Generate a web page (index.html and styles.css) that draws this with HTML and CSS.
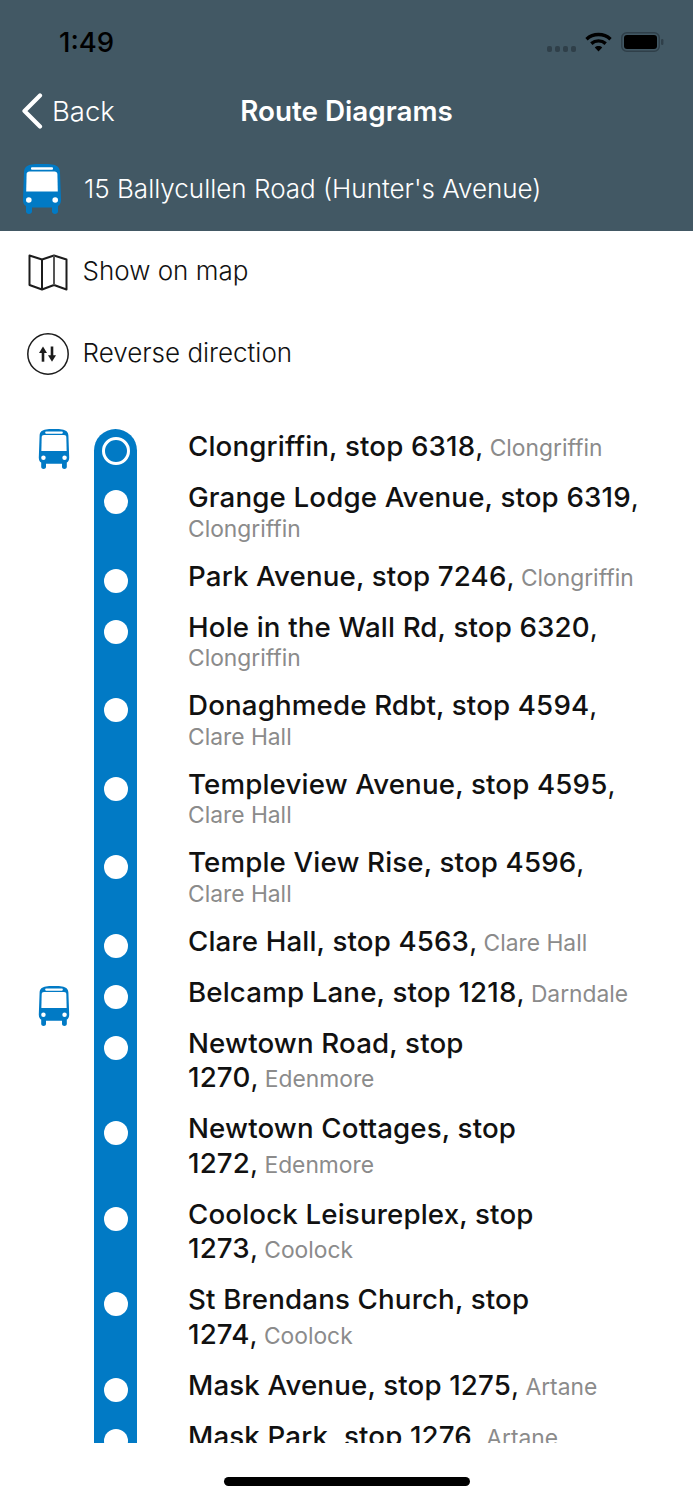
FILE: index.html
```html
<!DOCTYPE html>
<html lang="en">
<head>
<meta charset="utf-8">
<title>Route Diagrams</title>
<link rel="stylesheet" href="styles.css">
</head>
<body>
<svg class="defs" width="0" height="0" aria-hidden="true">
  <symbol id="bus" viewBox="0 0 38 50">
    <path fill="#017ac5" d="M9 0.5C15 -0.5 23 -0.5 29 0.5C34 1.2 36.8 3.5 37 8L38 36C38 39 36.5 41.5 35 42V47.5C35 50.7 29 50.7 29 47.5V43.5H9V47.5C9 50.7 3 50.7 3 47.5V42C1.500 41.5 0 39 0 36L1 8C1.200 3.5 4 1.200 9 0.5Z"/>
    <path fill="#fff" d="M6.500 7.500H31.500C33.300 7.500 34.300 8.500 34.400 10L34.800 27.500H3.200L3.600 10C3.700 8.500 4.700 7.500 6.500 7.500Z"/>
    <rect x="8" y="3.200" width="22" height="2.600" rx="1" fill="#fff"/>
    <circle cx="5.800" cy="36" r="2.800" fill="#fff"/>
    <circle cx="32.200" cy="36" r="2.800" fill="#fff"/>
  </symbol>
</svg>

<header class="top">
  <div class="status">
    <span class="time">1:49</span>
    <div class="indicators">
      <span class="signal"><i></i><i></i><i></i><i></i></span>
      <svg class="wifi" viewBox="0 0 27 20" width="27" height="20">
        <path d="M1.500 7.200C8.200 1 18.800 1 25.500 7.200" fill="none" stroke="#000" stroke-width="3.400"/>
        <path d="M6.300 11.600C10.400 8 16.600 8 20.700 11.600" fill="none" stroke="#000" stroke-width="3.400"/>
        <path d="M9.800 15.400C11.900 13.600 15.100 13.600 17.200 15.400L13.500 19.600Z" fill="#000"/>
      </svg>
      <svg class="battery" viewBox="0 0 43 20" width="43" height="20">
        <rect x="0.750" y="0.750" width="37.500" height="18.500" rx="5" fill="none" stroke="#2f3f49" stroke-width="1.500"/>
        <rect x="3" y="3" width="33" height="14" rx="3" fill="#000"/>
        <rect x="40" y="7" width="2.400" height="6" rx="1.200" fill="#2f3f49"/>
      </svg>
    </div>
  </div>
  <nav class="navbar">
    <a class="back">
      <svg viewBox="0 0 22 36" width="22" height="36"><path d="M19 2.500L3.500 18L19 33.500" fill="none" stroke="#fff" stroke-width="4.200" stroke-linecap="round" stroke-linejoin="round"/></svg>
      <span>Back</span>
    </a>
    <h1 class="title">Route Diagrams</h1>
  </nav>
  <div class="route">
    <svg class="route-bus"><use href="#bus"/></svg>
    <span>15 Ballycullen Road (Hunter's Avenue)</span>
  </div>
</header>

<main>
  <section class="actions">
    <div class="action">
      <svg class="action-icon" viewBox="0 0 42 44" width="42" height="44">
        <path d="M2.500 6.500L15 10.500L27 6.500L39.500 10.500V40.500L27 36L15 40.500L2.500 36Z" fill="none" stroke="#1c1c1c" stroke-width="2" stroke-linejoin="round"/>
        <path d="M15 10.500V40.500" fill="none" stroke="#1c1c1c" stroke-width="2"/>
        <path d="M27 6.500V36" fill="none" stroke="#555" stroke-width="2"/>
      </svg>
      <span>Show on map</span>
    </div>
    <div class="action">
      <svg class="action-icon" viewBox="0 0 42 44" width="42" height="44">
        <circle cx="21" cy="23" r="20.200" fill="none" stroke="#1c1c1c" stroke-width="1.500"/>
        <path d="M16 30.700V19" stroke="#1c1c1c" stroke-width="2.600" fill="none"/>
        <path d="M16 15.500L12 22H20Z" fill="#1c1c1c"/>
        <path d="M25 15.500V27" stroke="#1c1c1c" stroke-width="2.600" fill="none"/>
        <path d="M25 30.700L21 24.200H29Z" fill="#1c1c1c"/>
      </svg>
      <span>Reverse direction</span>
    </div>
  </section>

  <ol class="stops">
    <li class="stop first">
      <div class="vehicle"><svg class="list-bus"><use href="#bus"/></svg></div>
      <div class="rail"><span class="dot current"></span></div>
      <p><b>Clongriffin, stop 6318</b><b class="comma">,</b> <span>Clongriffin</span></p>
    </li>
    <li class="stop">
      <div class="vehicle"></div><div class="rail"><span class="dot"></span></div>
      <p><b>Grange Lodge Avenue, stop 6319</b><b class="comma">,</b> <span>Clongriffin</span></p>
    </li>
    <li class="stop">
      <div class="vehicle"></div><div class="rail"><span class="dot"></span></div>
      <p><b>Park Avenue, stop 7246</b><b class="comma">,</b> <span>Clongriffin</span></p>
    </li>
    <li class="stop">
      <div class="vehicle"></div><div class="rail"><span class="dot"></span></div>
      <p><b>Hole in the Wall Rd, stop 6320</b><b class="comma">,</b> <span>Clongriffin</span></p>
    </li>
    <li class="stop">
      <div class="vehicle"></div><div class="rail"><span class="dot"></span></div>
      <p><b>Donaghmede Rdbt, stop 4594</b><b class="comma">,</b> <span>Clare Hall</span></p>
    </li>
    <li class="stop">
      <div class="vehicle"></div><div class="rail"><span class="dot"></span></div>
      <p><b>Templeview Avenue, stop 4595</b><b class="comma">,</b> <span>Clare Hall</span></p>
    </li>
    <li class="stop">
      <div class="vehicle"></div><div class="rail"><span class="dot"></span></div>
      <p><b>Temple View Rise, stop 4596</b><b class="comma">,</b> <span>Clare Hall</span></p>
    </li>
    <li class="stop">
      <div class="vehicle"></div><div class="rail"><span class="dot"></span></div>
      <p><b>Clare Hall, stop 4563</b><b class="comma">,</b> <span>Clare Hall</span></p>
    </li>
    <li class="stop">
      <div class="vehicle"><svg class="list-bus lower"><use href="#bus"/></svg></div>
      <div class="rail"><span class="dot"></span></div>
      <p><b>Belcamp Lane, stop 1218</b><b class="comma">,</b> <span>Darndale</span></p>
    </li>
    <li class="stop">
      <div class="vehicle"></div><div class="rail"><span class="dot"></span></div>
      <p><b>Newtown Road, stop<br>1270</b><b class="comma">,</b> <span>Edenmore</span></p>
    </li>
    <li class="stop">
      <div class="vehicle"></div><div class="rail"><span class="dot"></span></div>
      <p><b>Newtown Cottages, stop<br>1272</b><b class="comma">,</b> <span>Edenmore</span></p>
    </li>
    <li class="stop">
      <div class="vehicle"></div><div class="rail"><span class="dot"></span></div>
      <p><b>Coolock Leisureplex, stop<br>1273</b><b class="comma">,</b> <span>Coolock</span></p>
    </li>
    <li class="stop">
      <div class="vehicle"></div><div class="rail"><span class="dot"></span></div>
      <p><b>St Brendans Church, stop<br>1274</b><b class="comma">,</b> <span>Coolock</span></p>
    </li>
    <li class="stop">
      <div class="vehicle"></div><div class="rail"><span class="dot"></span></div>
      <p><b>Mask Avenue, stop 1275</b><b class="comma">,</b> <span>Artane</span></p>
    </li>
    <li class="stop">
      <div class="vehicle"></div><div class="rail"><span class="dot"></span></div>
      <p><b>Mask Park, stop 1276</b><b class="comma">,</b> <span>Artane</span></p>
    </li>
  </ol>
</main>

<footer class="home"><span class="indicator"></span></footer>
</body>
</html>
```

FILE: styles.css
```css
* { box-sizing: border-box; }

html, body {
  margin: 0;
  height: 1500px;
  overflow: hidden;
  background: #fff;
}

body {
  font-family: Inter, "Noto Sans", sans-serif;
  color: #111;
}

.defs { position: absolute; }

/* Header band: status bar, navigation row, route row */
.top {
  height: 231px;
  background: #425864;
  color: #fff;
  display: flex;
  flex-direction: column;
}

.status {
  height: 84px;
  display: flex;
  justify-content: space-between;
  align-items: flex-start;
  padding: 26px 29px 0 59px;
}

.time {
  color: #000;
  font-size: 27.500px;
  font-weight: 500;
  line-height: 32px;
}

.indicators {
  display: flex;
  align-items: flex-start;
  gap: 9px;
  padding-top: 6px;
}

.signal {
  display: flex;
  gap: 2.500px;
  margin-top: 14px;
}

.signal i {
  width: 5.500px;
  height: 6px;
  border-radius: 2px;
  background: #2f3f49;
}

.navbar {
  height: 54px;
  position: relative;
  display: flex;
  align-items: center;
  justify-content: center;
}

.back {
  position: absolute;
  left: 21px;
  top: 9px;
  display: flex;
  align-items: center;
  gap: 9px;
  font-size: 27.500px;
  font-weight: 300;
}

.title {
  margin: 0;
  font-size: 27.800px;
  font-weight: 600;
}

.route {
  height: 93px;
  display: flex;
  align-items: flex-start;
  padding: 26px 0 0 23px;
  font-size: 26px;
  font-weight: 300;
  gap: 23px;
}

.route span { line-height: 50px; }

.route-bus { width: 38px; height: 50px; flex: none; }

/* Map and direction actions */
.actions {
  display: flex;
  flex-direction: column;
  padding-top: 18px;
}

.action {
  height: 82px;
  display: flex;
  align-items: flex-start;
  font-size: 26px;
  font-weight: 350;
  color: #111;
}

.action-icon {
  flex: none;
  margin-left: 27px;
  margin-right: 14px;
}

.action span { line-height: 43px; margin-left: -0.500px; }

/* Vertical stop list */
.stops {
  list-style: none;
  margin: 16px 0 0;
  padding: 0;
  height: 1014px;
  overflow: hidden;
}

.stop {
  display: flex;
  align-items: stretch;
}

.vehicle {
  width: 94px;
  flex: none;
  position: relative;
}

.list-bus {
  position: absolute;
  left: 38px;
  top: 0;
  width: 32px;
  height: 40px;
}

.list-bus.lower { top: 11px; }

.rail {
  width: 43px;
  flex: none;
  background: #017ac5;
  display: flex;
  justify-content: center;
  align-items: flex-start;
  padding-top: 10px;
}

.first .rail {
  border-radius: 21.500px 21.500px 0 0;
}

.dot {
  width: 24px;
  height: 24px;
  border-radius: 50%;
  background: #fff;
}

.dot.current {
  width: 28px;
  height: 28px;
  margin-top: -2px;
  background: #017ac5;
  border: 3px solid #fff;
}

.stop p {
  margin: 0 0 0 51px;
  padding: 0 0 16.500px;
  width: 458px;
  font-size: 22.800px;
  line-height: 27.600px;
  color: #8b8b8b;
  font-weight: 400;
}

.stop p span { white-space: nowrap; }

.stop b {
  font-size: 27.700px;
  line-height: 34.500px;
  font-weight: 500;
  letter-spacing: 0.15px;
  color: #111;
}

.stop b.comma { font-weight: 400; letter-spacing: 0; }

/* Home indicator strip */
.home {
  height: 57px;
  display: flex;
  justify-content: center;
  padding-top: 34px;
}

.indicator {
  width: 246px;
  height: 9px;
  border-radius: 5px;
  background: #000;
}
```
